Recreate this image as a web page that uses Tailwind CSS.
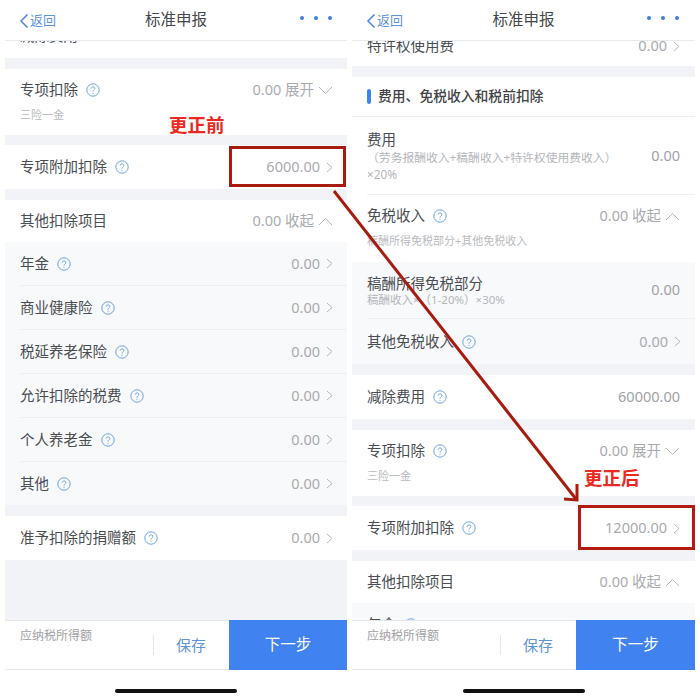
<!DOCTYPE html>
<html lang="zh-CN">
<head>
  <meta charset="UTF-8" />
  <title>标准申报</title>
  <script src="https://cdn.jsdelivr.net/npm/@tailwindcss/browser@4"></script>
</head>
<body class="bg-white">
<div class="relative w-[700px] h-[700px] overflow-hidden flex gap-[5px] pl-[5px] font-['Noto_Sans','Noto_Sans_CJK_SC',sans-serif] text-[14.5px] text-[#4a4d52]">

  <!-- 左侧：更正前 -->
  <div class="w-[342px] h-[700px] flex flex-col">
    <div class="h-[41px] shrink-0 relative flex items-center justify-center border-b border-[#e9eaee] bg-white">
      <div class="absolute left-[14px] top-[11px] flex items-center gap-[1px] text-[#5f93d8] text-[13px]">
        <svg class="w-[10px] h-[16px]" viewBox="0 0 10 16" fill="none" stroke="#4a86e0" stroke-width="1.5"><path d="M8.5 1.5 L2 8 L8.5 14.5"/></svg>
        <span>返回</span>
      </div>
      <span class="text-[15.5px] text-[#44474c]">标准申报</span>
      <div class="absolute right-[15px] top-[16px] flex gap-[10px]">
        <span class="w-[4px] h-[4px] rounded-full bg-[#3f7fdc]"></span>
        <span class="w-[4px] h-[4px] rounded-full bg-[#3f7fdc]"></span>
        <span class="w-[4px] h-[4px] rounded-full bg-[#3f7fdc]"></span>
      </div>
    </div>
    <div class="h-[579px] shrink-0 overflow-hidden bg-[#f2f3f7]">
      <div class="-mt-[27px] h-[44px] bg-white flex items-center justify-between pl-[15px] pr-[17px]">
        <span>减除费用</span><span class="text-[#a9abaf]">60000.00</span>
      </div>
      <div class="mt-[11px] h-[66px] bg-white pl-[15px] pr-[14px] pt-[10px]">
        <div class="flex items-center justify-between h-[22px]">
          <div class="flex items-center gap-[8px]"><span>专项扣除</span>
            <svg class="w-[14px] h-[14px]" viewBox="0 0 14 14" fill="none" stroke="#6fa3de" stroke-width="1"><circle cx="7" cy="7" r="6.2"/><path d="M5.2 5.6 C5.2 3.4 8.9 3.4 8.9 5.5 C8.9 6.9 7 6.9 7 8.6 M7 9.8 V10.8"/></svg>
          </div>
          <div class="flex items-center gap-[4px] text-[#a9abaf]"><span>0.00 展开</span>
            <svg class="w-[15px] h-[9px]" viewBox="0 0 15 9" fill="none" stroke="#b4b6ba" stroke-width="1"><path d="M1 1 L7.5 7.5 L14 1"/></svg>
          </div>
        </div>
        <div class="mt-[7px] text-[11px] leading-[14px] text-[#b8babd]">三险一金</div>
      </div>
      <div class="mt-[10px] h-[44px] bg-white flex items-center justify-between pl-[15px] pr-[14px]">
        <div class="flex items-center gap-[8px]"><span>专项附加扣除</span>
          <svg class="w-[14px] h-[14px]" viewBox="0 0 14 14" fill="none" stroke="#6fa3de" stroke-width="1"><circle cx="7" cy="7" r="6.2"/><path d="M5.2 5.6 C5.2 3.4 8.9 3.4 8.9 5.5 C8.9 6.9 7 6.9 7 8.6 M7 9.8 V10.8"/></svg>
        </div>
        <div class="flex items-center gap-[6px] text-[#a9abaf]"><span>6000.00</span>
          <svg class="w-[7px] h-[11px]" viewBox="0 0 7 11" fill="none" stroke="#b4b6ba" stroke-width="1"><path d="M1 1 L6 5.5 L1 10"/></svg>
        </div>
      </div>
      <div class="mt-[11px] h-[42px] bg-white flex items-center justify-between pl-[15px] pr-[14px]">
        <span>其他扣除项目</span>
        <div class="flex items-center gap-[4px] text-[#a9abaf]"><span>0.00 收起</span>
          <svg class="w-[15px] h-[9px]" viewBox="0 0 15 9" fill="none" stroke="#b4b6ba" stroke-width="1"><path d="M1 8 L7.5 1.5 L14 8"/></svg>
        </div>
      </div>
      <div class="bg-[#f8f9fb] pl-[15px]">
        <div class="h-[44px] flex items-center justify-between pr-[14px] border-b border-[#eeeff2]">
          <div class="flex items-center gap-[8px]"><span>年金</span>
            <svg class="w-[14px] h-[14px]" viewBox="0 0 14 14" fill="none" stroke="#6fa3de" stroke-width="1"><circle cx="7" cy="7" r="6.2"/><path d="M5.2 5.6 C5.2 3.4 8.9 3.4 8.9 5.5 C8.9 6.9 7 6.9 7 8.6 M7 9.8 V10.8"/></svg>
          </div>
          <div class="flex items-center gap-[6px] text-[#a9abaf]"><span>0.00</span>
            <svg class="w-[7px] h-[11px]" viewBox="0 0 7 11" fill="none" stroke="#b4b6ba" stroke-width="1"><path d="M1 1 L6 5.5 L1 10"/></svg>
          </div>
        </div>
        <div class="h-[44px] flex items-center justify-between pr-[14px] border-b border-[#eeeff2]">
          <div class="flex items-center gap-[8px]"><span>商业健康险</span>
            <svg class="w-[14px] h-[14px]" viewBox="0 0 14 14" fill="none" stroke="#6fa3de" stroke-width="1"><circle cx="7" cy="7" r="6.2"/><path d="M5.2 5.6 C5.2 3.4 8.9 3.4 8.9 5.5 C8.9 6.9 7 6.9 7 8.6 M7 9.8 V10.8"/></svg>
          </div>
          <div class="flex items-center gap-[6px] text-[#a9abaf]"><span>0.00</span>
            <svg class="w-[7px] h-[11px]" viewBox="0 0 7 11" fill="none" stroke="#b4b6ba" stroke-width="1"><path d="M1 1 L6 5.5 L1 10"/></svg>
          </div>
        </div>
        <div class="h-[44px] flex items-center justify-between pr-[14px] border-b border-[#eeeff2]">
          <div class="flex items-center gap-[8px]"><span>税延养老保险</span>
            <svg class="w-[14px] h-[14px]" viewBox="0 0 14 14" fill="none" stroke="#6fa3de" stroke-width="1"><circle cx="7" cy="7" r="6.2"/><path d="M5.2 5.6 C5.2 3.4 8.9 3.4 8.9 5.5 C8.9 6.9 7 6.9 7 8.6 M7 9.8 V10.8"/></svg>
          </div>
          <div class="flex items-center gap-[6px] text-[#a9abaf]"><span>0.00</span>
            <svg class="w-[7px] h-[11px]" viewBox="0 0 7 11" fill="none" stroke="#b4b6ba" stroke-width="1"><path d="M1 1 L6 5.5 L1 10"/></svg>
          </div>
        </div>
        <div class="h-[44px] flex items-center justify-between pr-[14px] border-b border-[#eeeff2]">
          <div class="flex items-center gap-[8px]"><span>允许扣除的税费</span>
            <svg class="w-[14px] h-[14px]" viewBox="0 0 14 14" fill="none" stroke="#6fa3de" stroke-width="1"><circle cx="7" cy="7" r="6.2"/><path d="M5.2 5.6 C5.2 3.4 8.9 3.4 8.9 5.5 C8.9 6.9 7 6.9 7 8.6 M7 9.8 V10.8"/></svg>
          </div>
          <div class="flex items-center gap-[6px] text-[#a9abaf]"><span>0.00</span>
            <svg class="w-[7px] h-[11px]" viewBox="0 0 7 11" fill="none" stroke="#b4b6ba" stroke-width="1"><path d="M1 1 L6 5.5 L1 10"/></svg>
          </div>
        </div>
        <div class="h-[44px] flex items-center justify-between pr-[14px] border-b border-[#eeeff2]">
          <div class="flex items-center gap-[8px]"><span>个人养老金</span>
            <svg class="w-[14px] h-[14px]" viewBox="0 0 14 14" fill="none" stroke="#6fa3de" stroke-width="1"><circle cx="7" cy="7" r="6.2"/><path d="M5.2 5.6 C5.2 3.4 8.9 3.4 8.9 5.5 C8.9 6.9 7 6.9 7 8.6 M7 9.8 V10.8"/></svg>
          </div>
          <div class="flex items-center gap-[6px] text-[#a9abaf]"><span>0.00</span>
            <svg class="w-[7px] h-[11px]" viewBox="0 0 7 11" fill="none" stroke="#b4b6ba" stroke-width="1"><path d="M1 1 L6 5.5 L1 10"/></svg>
          </div>
        </div>
        <div class="h-[43px] flex items-center justify-between pr-[14px]">
          <div class="flex items-center gap-[8px]"><span>其他</span>
            <svg class="w-[14px] h-[14px]" viewBox="0 0 14 14" fill="none" stroke="#6fa3de" stroke-width="1"><circle cx="7" cy="7" r="6.2"/><path d="M5.2 5.6 C5.2 3.4 8.9 3.4 8.9 5.5 C8.9 6.9 7 6.9 7 8.6 M7 9.8 V10.8"/></svg>
          </div>
          <div class="flex items-center gap-[6px] text-[#a9abaf]"><span>0.00</span>
            <svg class="w-[7px] h-[11px]" viewBox="0 0 7 11" fill="none" stroke="#b4b6ba" stroke-width="1"><path d="M1 1 L6 5.5 L1 10"/></svg>
          </div>
        </div>
      </div>
      <div class="mt-[11px] h-[44px] bg-white flex items-center justify-between pl-[15px] pr-[14px]">
        <div class="flex items-center gap-[8px]"><span>准予扣除的捐赠额</span>
          <svg class="w-[14px] h-[14px]" viewBox="0 0 14 14" fill="none" stroke="#6fa3de" stroke-width="1"><circle cx="7" cy="7" r="6.2"/><path d="M5.2 5.6 C5.2 3.4 8.9 3.4 8.9 5.5 C8.9 6.9 7 6.9 7 8.6 M7 9.8 V10.8"/></svg>
        </div>
        <div class="flex items-center gap-[6px] text-[#a9abaf]"><span>0.00</span>
          <svg class="w-[7px] h-[11px]" viewBox="0 0 7 11" fill="none" stroke="#b4b6ba" stroke-width="1"><path d="M1 1 L6 5.5 L1 10"/></svg>
        </div>
      </div>
    </div>
    <div class="h-[50px] shrink-0 flex border-t border-b border-[#e6e7ea] bg-white">
      <div class="w-[148px] pl-[15px] pt-[8px] text-[12px] leading-[14px] text-[#a0a2a6]">应纳税所得额</div>
      <div class="w-[76px] flex items-center justify-center text-[#5f93d8] text-[15px] relative">
        <span class="absolute left-0 top-[14px] h-[20px] w-px bg-[#e6e7ea]"></span>保存
      </div>
      <div class="flex-1 -mt-px -mb-px bg-[#3f82f0] flex items-center justify-center text-white text-[15.5px]">下一步</div>
    </div>
    <div class="flex-1 flex justify-center pt-[19px]">
      <span class="w-[122px] h-[4px] rounded-full bg-[#111111]"></span>
    </div>
  </div>

  <!-- 右侧：更正后 -->
  <div class="w-[343px] h-[700px] flex flex-col">
    <div class="h-[41px] shrink-0 relative flex items-center justify-center border-b border-[#e9eaee] bg-white">
      <div class="absolute left-[14px] top-[11px] flex items-center gap-[1px] text-[#5f93d8] text-[13px]">
        <svg class="w-[10px] h-[16px]" viewBox="0 0 10 16" fill="none" stroke="#4a86e0" stroke-width="1.5"><path d="M8.5 1.5 L2 8 L8.5 14.5"/></svg>
        <span>返回</span>
      </div>
      <span class="text-[15.5px] text-[#44474c]">标准申报</span>
      <div class="absolute right-[16px] top-[16px] flex gap-[10px]">
        <span class="w-[4px] h-[4px] rounded-full bg-[#3f7fdc]"></span>
        <span class="w-[4px] h-[4px] rounded-full bg-[#3f7fdc]"></span>
        <span class="w-[4px] h-[4px] rounded-full bg-[#3f7fdc]"></span>
      </div>
    </div>
    <div class="h-[579px] shrink-0 overflow-hidden bg-[#f2f3f7]">
      <div class="-mt-[15px] h-[40px] bg-white flex items-center justify-between pl-[15px] pr-[15px]">
        <span>特许权使用费</span>
        <div class="flex items-center gap-[6px] text-[#a9abaf]"><span>0.00</span>
          <svg class="w-[7px] h-[11px]" viewBox="0 0 7 11" fill="none" stroke="#b4b6ba" stroke-width="1"><path d="M1 1 L6 5.5 L1 10"/></svg>
        </div>
      </div>
      <div class="mt-[11px] h-[40px] bg-white flex items-center gap-[7px] pl-[15px] border-b border-[#eeeff2] text-[13.8px] font-medium text-[#3f4246]">
        <span class="w-[4px] h-[15px] rounded-[2px] bg-[#3f82f0]"></span>
        <span>费用、免税收入和税前扣除</span>
      </div>
      <div class="h-[77px] bg-white pl-[15px] pr-[15px] flex items-center justify-between">
        <div class="w-[270px]">
          <div class="leading-[20px]">费用</div>
          <div class="text-[11.8px] leading-[17px] text-[#b4b6ba]">（劳务报酬收入+稿酬收入+特许权使用费收入）<br>×20%</div>
        </div>
        <span class="text-[#a0a2a6]">0.00</span>
      </div>
      <div class="h-[68px] bg-white pl-[15px]">
        <div class="h-[68px] border-t border-[#eeeff2] pr-[15px] pt-[10px]">
          <div class="flex items-center justify-between h-[22px]">
            <div class="flex items-center gap-[8px]"><span>免税收入</span>
              <svg class="w-[14px] h-[14px]" viewBox="0 0 14 14" fill="none" stroke="#6fa3de" stroke-width="1"><circle cx="7" cy="7" r="6.2"/><path d="M5.2 5.6 C5.2 3.4 8.9 3.4 8.9 5.5 C8.9 6.9 7 6.9 7 8.6 M7 9.8 V10.8"/></svg>
            </div>
            <div class="flex items-center gap-[4px] text-[#a9abaf]"><span>0.00 收起</span>
              <svg class="w-[15px] h-[9px]" viewBox="0 0 15 9" fill="none" stroke="#b4b6ba" stroke-width="1"><path d="M1 8 L7.5 1.5 L14 8"/></svg>
            </div>
          </div>
          <div class="mt-[7px] text-[11px] leading-[14px] text-[#b8babd]">稿酬所得免税部分+其他免税收入</div>
        </div>
      </div>
      <div class="bg-[#f8f9fb] pl-[15px]">
        <div class="h-[57px] flex items-center justify-between pr-[15px] border-b border-[#eeeff2]">
          <div>
            <div class="leading-[20px]">稿酬所得免税部分</div>
            <div class="text-[11.5px] leading-[14px] text-[#b4b6ba]">稿酬收入×（1-20%）×30%</div>
          </div>
          <span class="text-[#a0a2a6]">0.00</span>
        </div>
        <div class="h-[45px] flex items-center justify-between pr-[14px]">
          <div class="flex items-center gap-[8px]"><span>其他免税收入</span>
            <svg class="w-[14px] h-[14px]" viewBox="0 0 14 14" fill="none" stroke="#6fa3de" stroke-width="1"><circle cx="7" cy="7" r="6.2"/><path d="M5.2 5.6 C5.2 3.4 8.9 3.4 8.9 5.5 C8.9 6.9 7 6.9 7 8.6 M7 9.8 V10.8"/></svg>
          </div>
          <div class="flex items-center gap-[6px] text-[#a9abaf]"><span>0.00</span>
            <svg class="w-[7px] h-[11px]" viewBox="0 0 7 11" fill="none" stroke="#b4b6ba" stroke-width="1"><path d="M1 1 L6 5.5 L1 10"/></svg>
          </div>
        </div>
      </div>
      <div class="mt-[11px] h-[44px] bg-white flex items-center justify-between pl-[15px] pr-[15px]">
        <div class="flex items-center gap-[8px]"><span>减除费用</span>
          <svg class="w-[14px] h-[14px]" viewBox="0 0 14 14" fill="none" stroke="#6fa3de" stroke-width="1"><circle cx="7" cy="7" r="6.2"/><path d="M5.2 5.6 C5.2 3.4 8.9 3.4 8.9 5.5 C8.9 6.9 7 6.9 7 8.6 M7 9.8 V10.8"/></svg>
        </div>
        <span class="text-[#a0a2a6]">60000.00</span>
      </div>
      <div class="mt-[11px] h-[66px] bg-white pl-[15px] pr-[15px] pt-[10px]">
        <div class="flex items-center justify-between h-[22px]">
          <div class="flex items-center gap-[8px]"><span>专项扣除</span>
            <svg class="w-[14px] h-[14px]" viewBox="0 0 14 14" fill="none" stroke="#6fa3de" stroke-width="1"><circle cx="7" cy="7" r="6.2"/><path d="M5.2 5.6 C5.2 3.4 8.9 3.4 8.9 5.5 C8.9 6.9 7 6.9 7 8.6 M7 9.8 V10.8"/></svg>
          </div>
          <div class="flex items-center gap-[4px] text-[#a9abaf]"><span>0.00 展开</span>
            <svg class="w-[15px] h-[9px]" viewBox="0 0 15 9" fill="none" stroke="#b4b6ba" stroke-width="1"><path d="M1 1 L7.5 7.5 L14 1"/></svg>
          </div>
        </div>
        <div class="mt-[7px] text-[11px] leading-[14px] text-[#b8babd]">三险一金</div>
      </div>
      <div class="mt-[10px] h-[44px] bg-white flex items-center justify-between pl-[15px] pr-[15px]">
        <div class="flex items-center gap-[8px]"><span>专项附加扣除</span>
          <svg class="w-[14px] h-[14px]" viewBox="0 0 14 14" fill="none" stroke="#6fa3de" stroke-width="1"><circle cx="7" cy="7" r="6.2"/><path d="M5.2 5.6 C5.2 3.4 8.9 3.4 8.9 5.5 C8.9 6.9 7 6.9 7 8.6 M7 9.8 V10.8"/></svg>
        </div>
        <div class="flex items-center gap-[6px] text-[#a9abaf]"><span>12000.00</span>
          <svg class="w-[7px] h-[11px]" viewBox="0 0 7 11" fill="none" stroke="#b4b6ba" stroke-width="1"><path d="M1 1 L6 5.5 L1 10"/></svg>
        </div>
      </div>
      <div class="mt-[11px] h-[42px] bg-white flex items-center justify-between pl-[15px] pr-[15px]">
        <span>其他扣除项目</span>
        <div class="flex items-center gap-[4px] text-[#a9abaf]"><span>0.00 收起</span>
          <svg class="w-[15px] h-[9px]" viewBox="0 0 15 9" fill="none" stroke="#b4b6ba" stroke-width="1"><path d="M1 8 L7.5 1.5 L14 8"/></svg>
        </div>
      </div>
      <div class="bg-[#f8f9fb] pl-[15px] h-[44px] flex items-center justify-between pr-[15px]">
        <div class="flex items-center gap-[8px]"><span>年金</span>
          <svg class="w-[14px] h-[14px]" viewBox="0 0 14 14" fill="none" stroke="#6fa3de" stroke-width="1"><circle cx="7" cy="7" r="6.2"/><path d="M5.2 5.6 C5.2 3.4 8.9 3.4 8.9 5.5 C8.9 6.9 7 6.9 7 8.6 M7 9.8 V10.8"/></svg>
        </div>
        <span class="text-[#a9abaf]">0.00</span>
      </div>
    </div>
    <div class="h-[50px] shrink-0 flex border-t border-b border-[#e6e7ea] bg-white">
      <div class="w-[148px] pl-[15px] pt-[8px] text-[12px] leading-[14px] text-[#a0a2a6]">应纳税所得额</div>
      <div class="w-[76px] flex items-center justify-center text-[#5f93d8] text-[15px] relative">
        <span class="absolute left-0 top-[14px] h-[20px] w-px bg-[#e6e7ea]"></span>保存
      </div>
      <div class="flex-1 -mt-px -mb-px bg-[#3f82f0] flex items-center justify-center text-white text-[15.5px]">下一步</div>
    </div>
    <div class="flex-1 flex justify-center pt-[19px]">
      <span class="w-[122px] h-[4px] rounded-full bg-[#111111]"></span>
    </div>
  </div>

  <!-- 标注 -->
  <div class="absolute left-[229px] top-[146px] w-[117px] h-[41px] border-[3px] border-[#a81c10]"></div>
  <div class="absolute left-[578px] top-[505px] w-[117px] h-[45px] border-[3px] border-[#b31b10]"></div>
  <span class="absolute left-[169px] top-[112px] text-[18.5px] leading-[26px] font-bold text-[#ea2a22]">更正前</span>
  <span class="absolute left-[584px] top-[465px] text-[18.5px] leading-[26px] font-bold text-[#ea2a22]">更正后</span>
  <svg class="absolute left-0 top-0 w-[700px] h-[700px] pointer-events-none" viewBox="0 0 700 700" fill="none" stroke="#a81c10" stroke-width="3">
    <path d="M334 191 L576 499"/>
    <path d="M564 499 L577 500 L577 484"/>
  </svg>
</div>
</body>
</html>
